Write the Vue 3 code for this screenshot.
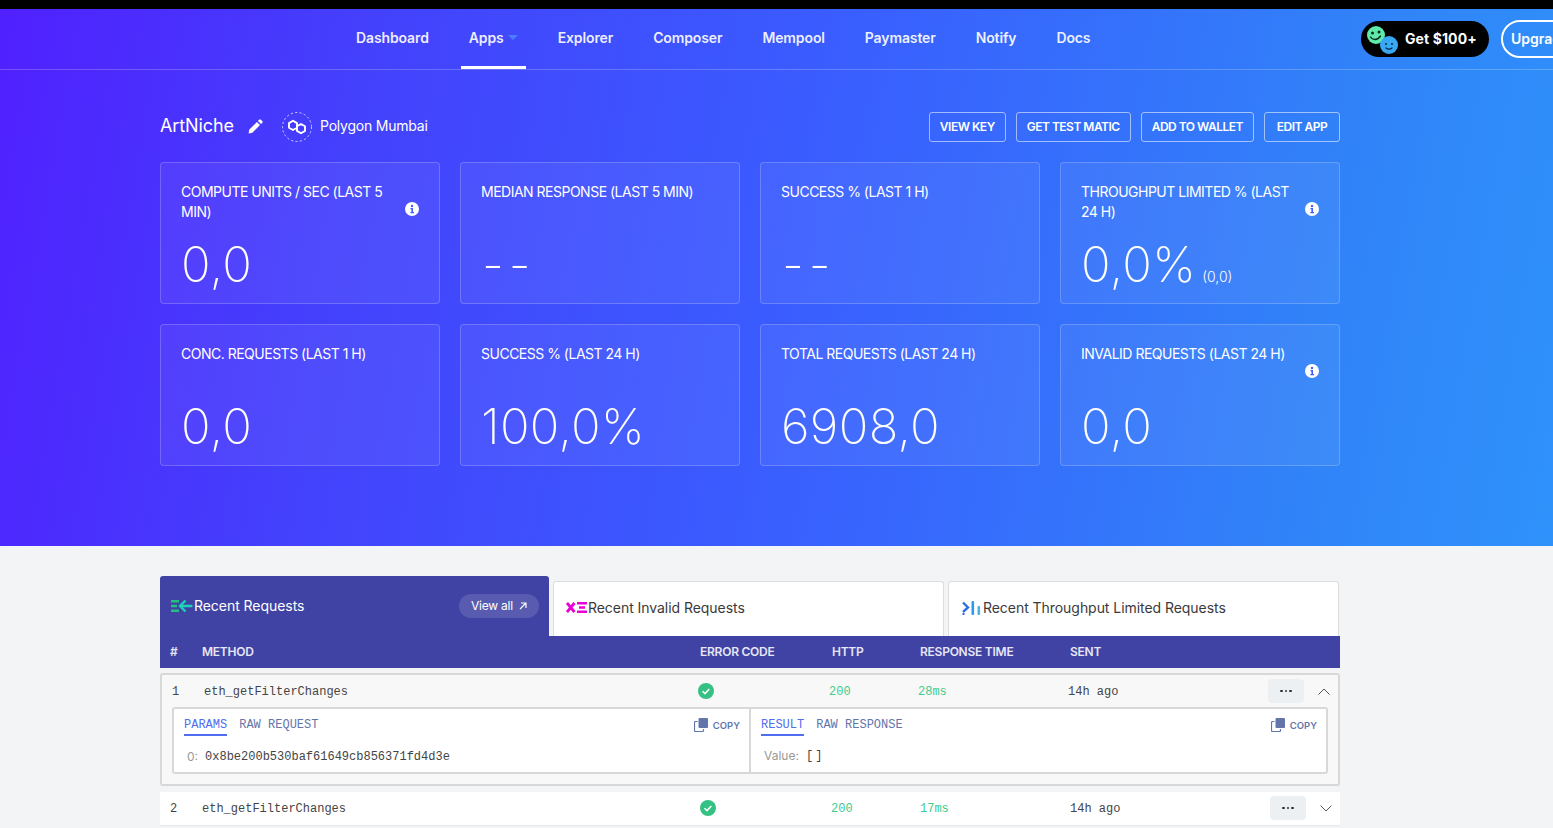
<script setup>
const navItems = [
  { label: 'Dashboard' },
  { label: 'Apps', active: true },
  { label: 'Explorer' },
  { label: 'Composer' },
  { label: 'Mempool' },
  { label: 'Paymaster' },
  { label: 'Notify' },
  { label: 'Docs' }
]
const actions = ['VIEW KEY', 'GET TEST MATIC', 'ADD TO WALLET', 'EDIT APP']
const stats = [
  { label: 'COMPUTE UNITS / SEC (LAST 5 MIN)', value: '0,0', info: true },
  { label: 'MEDIAN RESPONSE (LAST 5 MIN)', value: '--', dash: true },
  { label: 'SUCCESS % (LAST 1 H)', value: '--', dash: true },
  { label: 'THROUGHPUT LIMITED % (LAST 24 H)', value: '0,0%', sub: '(0,0)', info: true },
  { label: 'CONC. REQUESTS (LAST 1 H)', value: '0,0' },
  { label: 'SUCCESS % (LAST 24 H)', value: '100,0%' },
  { label: 'TOTAL REQUESTS (LAST 24 H)', value: '6908,0' },
  { label: 'INVALID REQUESTS (LAST 24 H)', value: '0,0', info: true }
]
</script>

<template>
  <div class="page">
    <div class="topline"></div>
    <section class="hero">
      <header class="nav">
        <nav class="nav-links">
          <a v-for="item in navItems" :key="item.label" class="nav-link" :class="{ active: item.active }">
            {{ item.label }}<span v-if="item.active" class="caret"></span>
          </a>
        </nav>
        <div class="nav-right">
          <a class="promo">
            <svg class="faces" width="36" height="30" viewBox="0 0 36 30">
              <circle cx="11" cy="11" r="9" fill="#5eeaa8" />
              <circle cx="7.500" cy="9" r="1.500" fill="#0b2a22" />
              <circle cx="14" cy="8" r="1.500" fill="#0b2a22" />
              <path d="M5.500 13c2 3.500 7 3.500 10-1" fill="none" stroke="#0b2a22" stroke-width="1.400" stroke-linecap="round" />
              <circle cx="24" cy="21" r="9" fill="#38a8f5" />
              <circle cx="21" cy="20" r="1" fill="#0b2a44" />
              <circle cx="27" cy="20" r="1" fill="#0b2a44" />
              <path d="M21 24c1.500 1.500 4.500 1.500 6 0" fill="none" stroke="#0b2a44" stroke-width="1.200" stroke-linecap="round" />
            </svg>
            <span>Get $100+</span>
          </a>
          <a class="upgrade">Upgrade</a>
        </div>
      </header>

      <div class="container">
        <div class="title-row">
          <div class="title-left">
            <h1 class="app-name">ArtNiche</h1>
            <svg class="pencil" width="15" height="15" viewBox="0 0 15 15">
              <path d="M0.600 14.400l0.700-3.800 7.600-7.600 3.100 3.100-7.600 7.600zM9.900 2l1.200-1.200a1.300 1.300 0 0 1 1.800 0l1.300 1.300a1.300 1.300 0 0 1 0 1.800L13 5.100z" fill="#fff" />
            </svg>
            <span class="chain-logo">
              <svg width="32" height="32" viewBox="0 0 32 32">
                <circle cx="16" cy="16" r="14.500" fill="none" stroke="#fff" stroke-opacity=".7" stroke-width="1" stroke-dasharray="2.200 2.200" />
                <path d="M12 9.800l4 2.300v4.600l-4 2.300-4-2.300v-4.600z" fill="none" stroke="#fff" stroke-width="1.900" stroke-linejoin="round" />
                <path d="M20 13l4 2.300v4.600l-4 2.300-4-2.300v-4.600z" fill="none" stroke="#fff" stroke-width="1.900" stroke-linejoin="round" />
              </svg>
            </span>
            <span class="chain-name">Polygon Mumbai</span>
          </div>
          <div class="actions">
            <button v-for="a in actions" :key="a" class="action">{{ a }}</button>
          </div>
        </div>

        <div class="stats">
          <div v-for="s in stats" :key="s.label" class="stat">
            <div class="stat-head">
              <span class="stat-label">{{ s.label }}</span>
              <svg v-if="s.info" class="info" width="14" height="14" viewBox="0 0 14 14">
                <circle cx="7" cy="7" r="7" fill="#fff" />
                <circle cx="7" cy="4" r="1.200" fill="#3f5cff" />
                <path d="M5.500 6h2.500v4h1v1.200H5.400V10h1V7.200h-.9z" fill="#3f5cff" />
              </svg>
            </div>
            <div class="stat-value" :class="{ dash: s.dash }">
              {{ s.value }}<small v-if="s.sub">{{ s.sub }}</small>
            </div>
          </div>
        </div>
      </div>
    </section>

    <section class="lower">
      <div class="tabs">
        <div class="tab tab-active">
          <svg width="22" height="14" viewBox="0 0 22 14">
            <path d="M0 1h8v2.400H0zM0 5.800h6v2.400H0zM0 10.600h8V13H0z" fill="#25c07f" />
            <path d="M21.500 7H9.500M14.500 1.500L9 7l5.500 5.500" fill="none" stroke="#1fd0b8" stroke-width="2.400" />
          </svg>
          <span class="tab-text">Recent Requests</span>
          <a class="view-all">View all
            <svg width="8" height="8" viewBox="0 0 8 8"><path d="M1 7l5.500-5.500M2 1h5v5" fill="none" stroke="#fff" stroke-width="1.200" /></svg>
          </a>
        </div>
        <div class="tab">
          <svg width="21" height="13" viewBox="0 0 21 13">
            <path d="M1 2l7.500 9M8.500 2L1 11" fill="none" stroke="#ea00d2" stroke-width="2.800" />
            <path d="M11 1h10v2.400H11zM13 5.300h6v2.400h-6zM11 9.600h10V12H11z" fill="#ea00d2" />
          </svg>
          <span class="tab-text">Recent Invalid Requests</span>
        </div>
        <div class="tab">
          <svg width="21" height="14" viewBox="0 0 19 14">
            <path d="M1 1.500L6 6.500 1 11" fill="none" stroke="#2f6fe0" stroke-width="2.400" />
            <rect x="0.500" y="12" width="2" height="2" fill="#2f6fe0" />
            <rect x="9.500" y="0" width="2.600" height="14" rx="1" fill="#2f9be8" />
            <rect x="15.500" y="5" width="2.600" height="9" rx="1" fill="#4ab0e8" />
          </svg>
          <span class="tab-text">Recent Throughput Limited Requests</span>
        </div>
      </div>

      <div class="thead">
        <span>#</span><span>METHOD</span><span>ERROR CODE</span><span>HTTP</span><span>RESPONSE TIME</span><span>SENT</span>
      </div>

      <div class="row row-open">
        <div class="cells cells-open">
          <span>1</span>
          <span>eth_getFilterChanges</span>
          <svg width="16" height="16" viewBox="0 0 16 16"><circle cx="8" cy="8" r="8" fill="#35c183" /><path d="M4.500 8.200l2.500 2.400 4.300-4.700" fill="none" stroke="#fff" stroke-width="1.500" /></svg>
          <span class="green">200</span>
          <span class="green">28ms</span>
          <span>14h ago</span>
          <button class="more"><i></i><i></i><i></i></button>
          <svg class="chev" width="12" height="7" viewBox="0 0 12 7"><path d="M.5 6.500L6 1l5.500 5.500" fill="none" stroke="#555" stroke-width="1" /></svg>
        </div>
        <div class="detail">
          <div class="pane">
            <div class="pane-head">
              <span class="pane-tab on">PARAMS</span>
              <span class="pane-tab">RAW REQUEST</span>
              <span class="copy">
                <svg width="14" height="14" viewBox="0 0 14 14"><rect x="4.500" y="0" width="9.500" height="10" rx="1" fill="#6475ab" /><path d="M3.500 3.500H1.500a1 1 0 0 0-1 1V12.500a1 1 0 0 0 1 1H8.500a1 1 0 0 0 1-1V11" fill="none" stroke="#6475ab" stroke-width="1.200" /></svg>
                COPY
              </span>
            </div>
            <div class="pane-body"><span class="key sans">0:</span><span>0x8be200b530baf61649cb856371fd4d3e</span></div>
          </div>
          <div class="pane pane-right">
            <div class="pane-head">
              <span class="pane-tab on">RESULT</span>
              <span class="pane-tab">RAW RESPONSE</span>
              <span class="copy">
                <svg width="14" height="14" viewBox="0 0 14 14"><rect x="4.500" y="0" width="9.500" height="10" rx="1" fill="#6475ab" /><path d="M3.500 3.500H1.500a1 1 0 0 0-1 1V12.500a1 1 0 0 0 1 1H8.500a1 1 0 0 0 1-1V11" fill="none" stroke="#6475ab" stroke-width="1.200" /></svg>
                COPY
              </span>
            </div>
            <div class="pane-body"><span class="key sans">Value:</span><span class="brackets">[ ]</span></div>
          </div>
        </div>
      </div>

      <div class="row row-closed">
        <div class="cells">
          <span>2</span>
          <span>eth_getFilterChanges</span>
          <svg width="16" height="16" viewBox="0 0 16 16"><circle cx="8" cy="8" r="8" fill="#35c183" /><path d="M4.500 8.200l2.500 2.400 4.300-4.700" fill="none" stroke="#fff" stroke-width="1.500" /></svg>
          <span class="green">200</span>
          <span class="green">17ms</span>
          <span>14h ago</span>
          <button class="more"><i></i><i></i><i></i></button>
          <svg class="chev" width="12" height="7" viewBox="0 0 12 7"><path d="M.5 .5L6 6l5.500-5.500" fill="none" stroke="#555" stroke-width="1" /></svg>
        </div>
      </div>
    </section>
  </div>
</template>

<style>
html, body { margin: 0; overflow: hidden; background: #f3f4f6; }
</style>

<style scoped>
.page {
  height: 828px;
  overflow: hidden;
  font-family: Inter, "Noto Sans", sans-serif;
  background: #f3f4f6;
  color: #3a3a3a;
}
.topline { height: 9px; background: #000; }
.hero {
  height: 537px;
  background: linear-gradient(100deg, #5020ff 0%, #4440fc 22%, #3a5cff 50%, #3085f8 86%, #2f92fb 100%);
  color: #fff;
}
.nav {
  height: 60px;
  border-bottom: 1px solid rgba(255, 255, 255, .22);
  display: flex;
  padding-left: 348px;
  overflow: hidden;
}
.nav-links { display: flex; width: 1013px; flex: none; gap: 24px; }
.nav-link {
  position: relative;
  display: flex;
  align-items: center;
  box-sizing: border-box;
  padding: 0 8px 3px;
  font-size: 14px;
  font-weight: 600;
  letter-spacing: -.12px;
  height: 60px;
  color: rgba(255, 255, 255, .92);
}
.nav-link.active::after {
  content: "";
  position: absolute;
  left: 0;
  right: 0;
  bottom: 0;
  height: 3px;
  background: #fff;
}
.caret {
  margin-left: 4px;
  border-left: 5px solid transparent;
  border-right: 5px solid transparent;
  border-top: 5px solid #4a7dff;
}
.nav-right { display: flex; align-items: center; gap: 12px; flex: none; }
.promo {
  display: flex;
  align-items: center;
  width: 128px;
  height: 36px;
  box-sizing: border-box;
  padding-left: 4px;
  background: #000;
  border-radius: 18px;
  font-size: 14px;
  font-weight: 700;
  letter-spacing: .1px;
  gap: 4px;
}
.promo span { padding-bottom: 2px; }
.faces { flex: none; }
.upgrade {
  display: flex;
  align-items: center;
  height: 38px;
  box-sizing: border-box;
  width: 90px;
  padding: 0 0 2px 8px;
  border: 2px solid #fff;
  border-radius: 19px;
  font-size: 14px;
  font-weight: 600;
}
.container { width: 1180px; margin-left: 160px; }
.title-row {
  display: flex;
  justify-content: space-between;
  align-items: center;
  padding-top: 42px;
  height: 30px;
}
.title-left { display: flex; align-items: center; padding-bottom: 1px; }
.app-name { margin: 0; font-size: 18px; font-weight: 400; width: 88px; letter-spacing: -.1px; padding-bottom: 2px; }
.pencil { flex: none; }
.chain-logo { display: flex; margin-left: 18px; }
.chain-name { margin-left: 7px; font-size: 14px; letter-spacing: -.22px; padding-bottom: 2px; }
.actions { display: flex; gap: 10px; }
.action {
  height: 30px;
  padding: 0 10px 2px;
  background: transparent;
  border: 1px solid rgba(255, 255, 255, .55);
  border-radius: 3px;
  color: #fff;
  font: 600 12px Inter, sans-serif;
  letter-spacing: -.5px;
}
.action:last-child { min-width: 76px; }
.stats {
  display: grid;
  grid-template-columns: repeat(4, 280px);
  grid-auto-rows: 142px;
  gap: 20px;
  margin-top: 20px;
}
.stat {
  box-sizing: border-box;
  padding: 19px 20px 0;
  background: rgba(255, 255, 255, .06);
  border: 1px solid rgba(255, 255, 255, .2);
  border-radius: 4px;
}
.stat-head { display: flex; justify-content: space-between; height: 40px; }
.stat-label { font-size: 14px; line-height: 20px; width: 216px; letter-spacing: -.5px; flex: none; }
.stat-label:only-child { width: auto; }
.info { margin-top: 20px; flex: none; }
.stat-value {
  margin-top: 19px;
  font-size: 49px;
  font-weight: 250;
  line-height: 48px;
  white-space: pre;
  letter-spacing: .3px;
}
.stat-value.dash { letter-spacing: 5px; padding-left: 1px; }
.stat-value small { margin-left: 6px; font-size: 14px; font-weight: 300; letter-spacing: 0; }

.lower { width: 1180px; margin-left: 160px; padding-top: 30px; }
.tabs { display: flex; align-items: flex-end; height: 60px; }
.tab {
  box-sizing: border-box;
  width: 391px;
  height: 55px;
  margin-left: 4px;
  padding: 0 0 3px 12px;
  display: flex;
  align-items: center;
  gap: 1px;
  background: #fff;
  border: 1px solid #ddd;
  border-bottom: 0;
  border-radius: 3px 3px 0 0;
  font-size: 14px;
  letter-spacing: -.05px;
}
.tab-active {
  width: 389px;
  height: 60px;
  margin-left: 0;
  padding: 0 10px 1px 11px;
  background: #4043a4;
  border: 0;
  color: #fff;
}
.view-all {
  margin-left: auto;
  display: flex;
  align-items: center;
  gap: 6px;
  height: 24px;
  padding: 0 12px;
  border-radius: 12px;
  background: rgba(255, 255, 255, .13);
  font-size: 12px;
  letter-spacing: -.2px;
}
.thead {
  display: grid;
  grid-template-columns: 32px 498px 132px 88px 150px 1fr;
  align-items: center;
  box-sizing: border-box;
  height: 32px;
  padding: 0 0 2px 10px;
  background: #4043a4;
  color: #e6e6f5;
  font-size: 12px;
  font-weight: 600;
  letter-spacing: -.25px;
}
.row { font-family: "Liberation Mono", monospace; font-size: 12px; color: #444; }
.row-open {
  box-sizing: border-box;
  height: 113px;
  margin-top: 5px;
  background: #f8f8f8;
  border: 2px solid #d8d8d8;
  border-radius: 3px;
}
.row-closed {
  height: 33px;
  margin-top: 6px;
  background: #fff;
  border-bottom: 1px solid #e8e8e8;
}
.cells {
  display: grid;
  grid-template-columns: 32px 498px 131px 89px 150px 200px 36px 14px;
  align-items: center;
  height: 32px;
  padding-left: 10px;
}
.cells > span { padding-top: 2px; }
.cells-open {
  grid-template-columns: 32px 494px 131px 89px 150px 200px 36px 14px;
}
.green { color: #3ecb8d; }
.more {
  display: flex;
  align-items: center;
  justify-content: center;
  gap: 2px;
  width: 36px;
  height: 24px;
  padding: 0;
  border: 0;
  border-radius: 4px;
  background: #ecf0f3;
}
.more i { width: 2.500px; height: 2.500px; border-radius: 50%; background: #333; }
.chev { margin-left: 14px; }
.detail {
  display: flex;
  box-sizing: border-box;
  width: 1156px;
  height: 67px;
  margin-left: 10px;
  background: #fff;
  border: 2px solid #d8d8d8;
  border-radius: 3px;
}
.pane { box-sizing: border-box; flex: none; width: 577px; padding: 0 9px 0 10px; border-right: 2px solid #d8d8d8; }
.pane-right { flex: 1; width: auto; border-right: 0; }
.pane-head { display: flex; gap: 12px; height: 28px; color: #6475ab; }
.pane-tab { line-height: 16px; padding: 8px 0 1px; height: 16px; }
.pane-tab.on { color: #4f6ef0; border-bottom: 2px solid #4f6ef0; }
.copy {
  margin-left: auto;
  display: flex;
  align-items: center;
  gap: 5px;
  height: 32px;
  font: 600 9.500px Inter, sans-serif;
}
.pane-body { display: flex; gap: 7px; align-items: center; height: 37px; padding: 2px 0 0 3px; box-sizing: border-box; }
.pane-right .pane-body { padding-top: 0; }
.brackets { letter-spacing: -2.500px; }
.key { color: #999; }
.sans { font-family: Inter, sans-serif; font-size: 12px; }
</style>
